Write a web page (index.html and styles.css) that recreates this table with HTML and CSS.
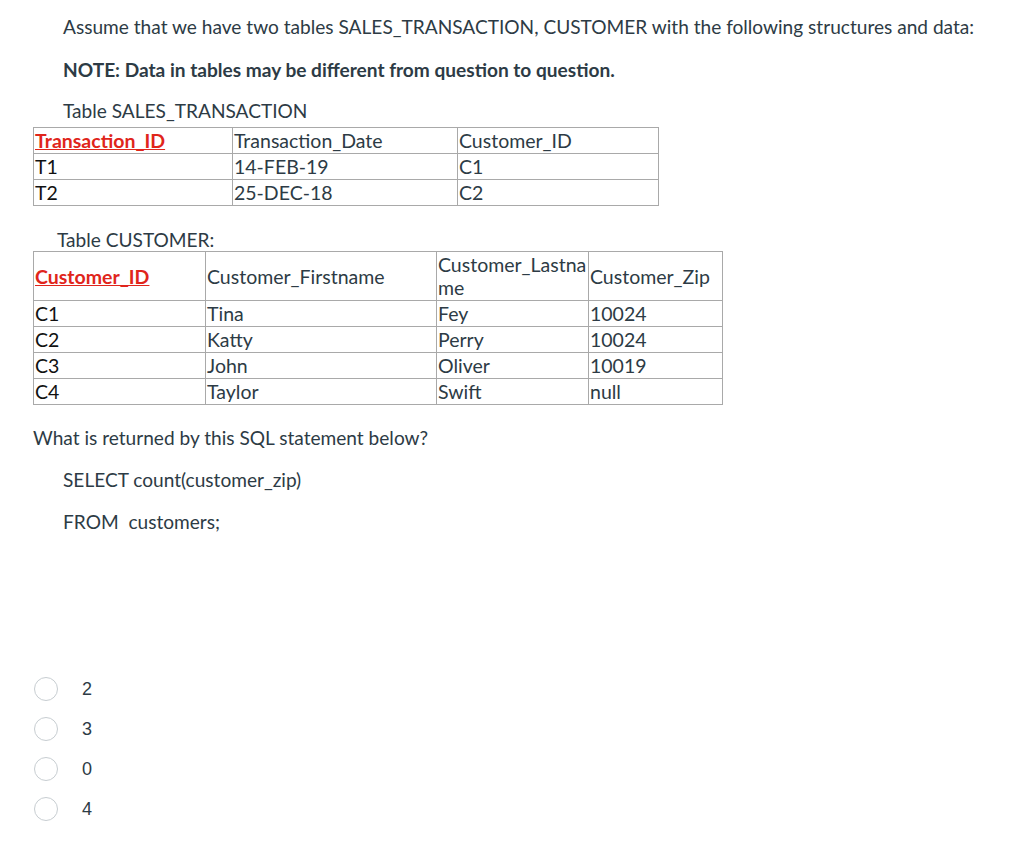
FILE: index.html
```html
<!DOCTYPE html>
<html>
<head>
<meta charset="utf-8">
<link rel="stylesheet" href="styles.css">
</head>
<body>
<div class="question">
  <p class="para indent first">Assume that we have two tables SALES_TRANSACTION, CUSTOMER with the following structures and data:</p>
  <p class="para indent note"><strong>NOTE: Data in tables may be different from question to question.</strong></p>
  <p class="para indent caption">Table SALES_TRANSACTION</p>
  <table class="grid sales">
    <colgroup><col class="c-s1"><col class="c-s2"><col class="c-s3"></colgroup>
    <tr><td><span class="key">Transaction_ID</span></td><td>Transaction_Date</td><td>Customer_ID</td></tr>
    <tr><td class="dark">T1</td><td>14-FEB-19</td><td>C1</td></tr>
    <tr><td class="dark">T2</td><td>25-DEC-18</td><td>C2</td></tr>
  </table>
  <p class="para caption2">Table CUSTOMER:</p>
  <table class="grid customer">
    <colgroup><col class="c-c1"><col class="c-c2"><col class="c-c3"><col class="c-c4"></colgroup>
    <tr class="head"><td><span class="key">Customer_ID</span></td><td>Customer_Firstname</td><td class="brk">Customer_Lastname</td><td>Customer_Zip</td></tr>
    <tr><td class="dark">C1</td><td>Tina</td><td>Fey</td><td>10024</td></tr>
    <tr><td class="dark">C2</td><td>Katty</td><td>Perry</td><td>10024</td></tr>
    <tr><td class="dark">C3</td><td>John</td><td>Oliver</td><td>10019</td></tr>
    <tr><td class="dark">C4</td><td>Taylor</td><td>Swift</td><td>null</td></tr>
  </table>
  <p class="para ask">What is returned by this SQL statement below?</p>
  <p class="para indent sql">SELECT count(customer_zip)</p>
  <p class="para indent sql">FROM&nbsp; customers;</p>
  <div class="answers">
    <label class="answer"><span class="radio"></span><span class="val">2</span></label>
    <label class="answer"><span class="radio"></span><span class="val">3</span></label>
    <label class="answer"><span class="radio"></span><span class="val">0</span></label>
    <label class="answer"><span class="radio"></span><span class="val">4</span></label>
  </div>
</div>
</body>
</html>
```
FILE: styles.css
```css
html, body {
  margin: 0;
  padding: 0;
  background: #ffffff;
}
body {
  font-family: Lato, "Open Sans", sans-serif;
  font-size: 19.1px;
  color: #2d3b45;
}
.question {
  padding: 15px 0 0 33px;
}
.para {
  margin: 0;
  line-height: 24px;
}
.indent {
  margin-left: 30px;
}
.note {
  margin-top: 19px;
}
.note strong {
  font-weight: 700;
}
.caption {
  margin-top: 17px;
  margin-bottom: 4px;
}
.grid {
  border-collapse: collapse;
  table-layout: fixed;
  font-size: 19.5px;
}
.grid td {
  border: 1px solid #a9a9a9;
  padding: 1px 1px;
  line-height: 23px;
  vertical-align: middle;
  color: #2d3b45;
}
.grid td.dark {
  color: #111111;
}
.sales {
  width: 625px;
}
.c-s1 { width: 199px; }
.c-s2 { width: 225px; }
.c-s3 { width: 201px; }
.customer {
  width: 689px;
}
.c-c1 { width: 172px; }
.c-c2 { width: 231px; }
.c-c3 { width: 152px; }
.c-c4 { width: 134px; }
.brk {
  word-break: break-all;
}
.key {
  color: #e0251b;
  font-weight: 700;
  text-decoration: underline;
}
.caption2 {
  margin: 23px 0 0 24px;
  line-height: 22px;
}
.ask {
  margin-top: 21px;
}
.sql {
  margin-top: 18px;
}
.answers {
  margin-top: 143px;
  display: flex;
  flex-direction: column;
  gap: 16px;
}
.answer {
  display: flex;
  align-items: center;
  height: 24px;
}
.radio {
  width: 22px;
  height: 22px;
  border: 1px solid #c7cdd1;
  border-radius: 50%;
  margin-left: 1px;
  background: #fff;
}
.val {
  margin-left: 24px;
  font-family: "Liberation Sans", Arial, sans-serif;
  font-size: 18px;
  color: #2d3b45;
}
```
